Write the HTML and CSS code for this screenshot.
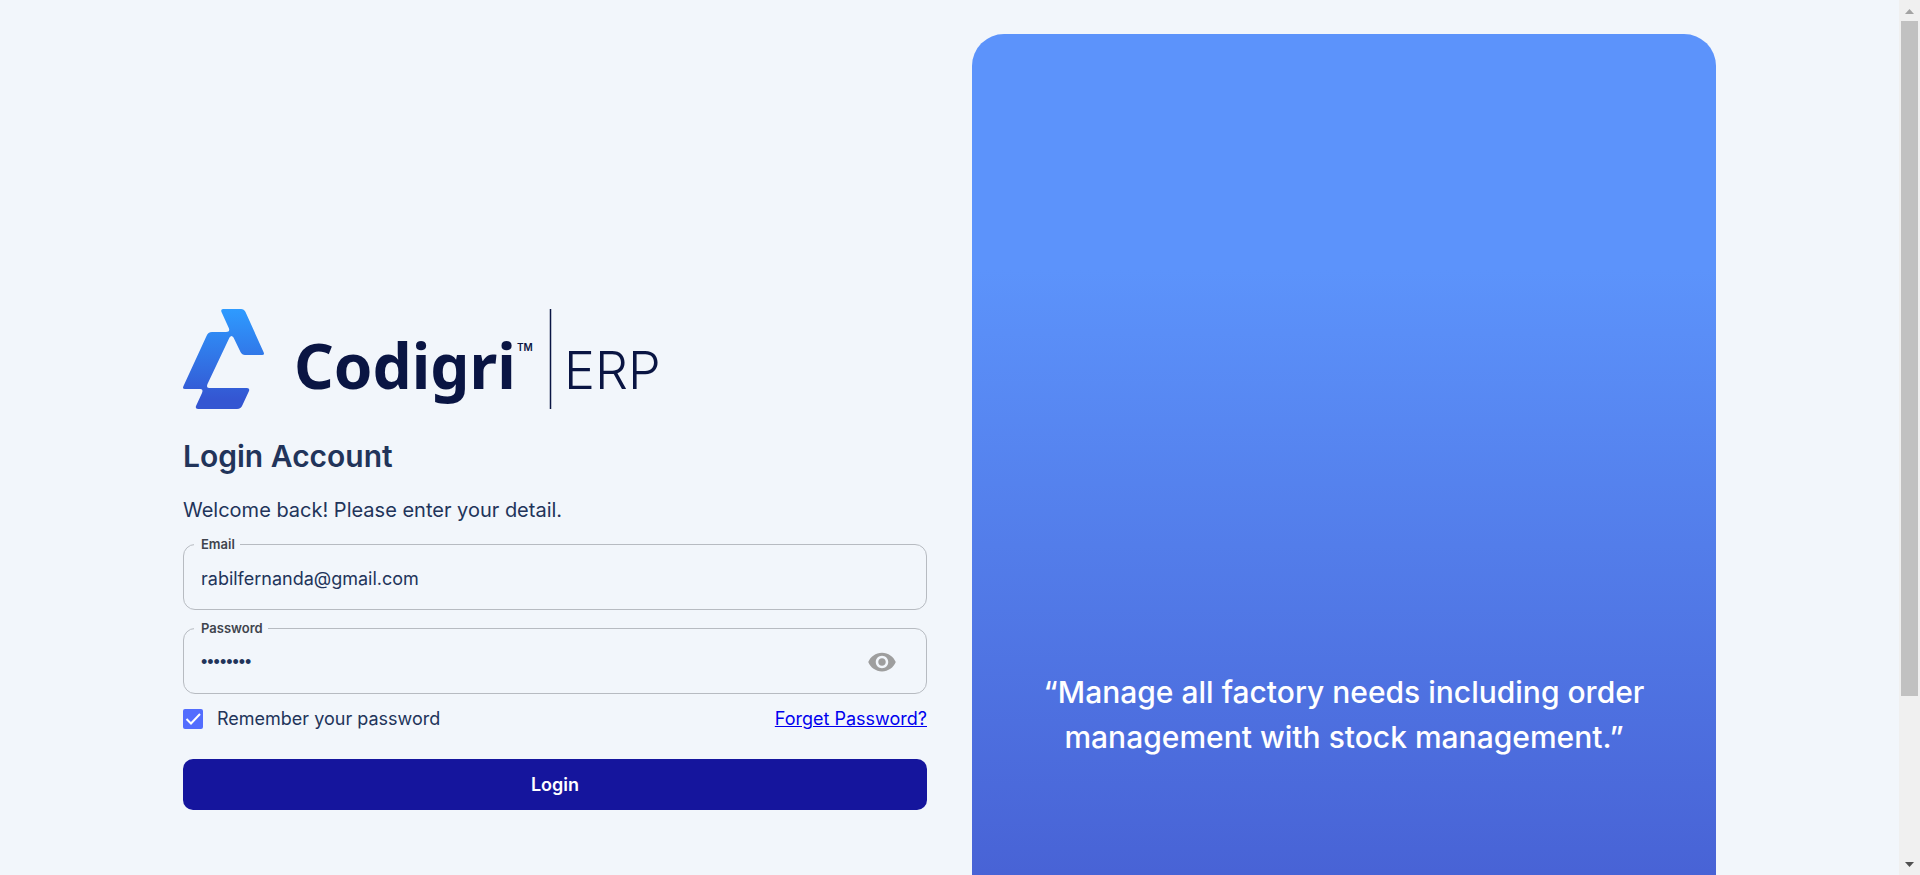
FILE: index.html
```html
<!DOCTYPE html>
<html lang="en">
<head>
<meta charset="utf-8">
<meta name="viewport" content="width=device-width, initial-scale=1">
<title>Codigri ERP - Login</title>
<link rel="stylesheet" href="styles.css">
</head>
<body>
<div class="window">
  <main class="page">
    <div class="layout">
      <form class="login">
        <svg class="logo" viewBox="0 0 480 100" width="480" height="100" role="img" aria-label="Codigri ERP">
          <defs>
            <linearGradient id="mark" x1="0" y1="0" x2="0" y2="1">
              <stop offset="0" stop-color="#2e9bff"/>
              <stop offset="0.9" stop-color="#3456d2"/>
              <stop offset="1" stop-color="#3456d2"/>
            </linearGradient>
          </defs>
          <path fill="url(#mark)" d="M40 0H58Q61 0 62.500 3L80.500 43Q82 46 79 46H62Q59 46 57.500 43L50.500 28.500Q48.500 25.500 46.500 28.500L24.500 75Q23 79 26 79H64Q67 79 66 82L59.500 96Q58 100 54 100H15Q12 100 13 97L19 84Q20.500 80 17.500 80H2Q-1 80 .5 77L23.500 27Q25 23 29 23H43Q47 23 46 19.500L38.500 3Q37.500 0 40 0Z"/>
          <text class="logo-name" x="111" y="80">Codigri</text>
          <text class="logo-tm" x="334" y="42">TM</text>
          <path d="M367.500 0V100" stroke="#0a1543" stroke-width="1.500"/>
          <text class="logo-product" x="381" y="80">ERP</text>
        </svg>
        <h1 class="title">Login Account</h1>
        <p class="intro">Welcome back! Please enter your detail.</p>
        <fieldset class="field">
          <legend class="field-legend"><label for="email">Email</label></legend>
          <div class="field-row">
            <input class="field-input" id="email" type="email" value="rabilfernanda@gmail.com">
          </div>
        </fieldset>
        <fieldset class="field">
          <legend class="field-legend"><label for="password">Password</label></legend>
          <div class="field-row">
            <input class="field-input field-input-secret" id="password" type="password" value="password">
            <button class="reveal" type="button" aria-label="Show password">
              <svg viewBox="0 0 24 24" width="30" height="30"><path fill="#9e9e9e" d="M12 4.500C7 4.500 2.730 7.610 1 12c1.730 4.390 6 7.500 11 7.500s9.270-3.110 11-7.500c-1.730-4.390-6-7.500-11-7.500zM12 17c-2.760 0-5-2.240-5-5s2.240-5 5-5 5 2.240 5 5-2.240 5-5 5zm0-8c-1.660 0-3 1.340-3 3s1.340 3 3 3 3-1.340 3-3-1.340-3-3-3z"/></svg>
            </button>
          </div>
        </fieldset>
        <div class="options">
          <label class="remember">
            <span class="check">
              <input class="check-box" type="checkbox" checked>
              <svg class="check-mark" viewBox="0 0 20 20" width="20" height="20"><path d="M3.500 10L8 14.500L17 5" fill="none" stroke="#fff" stroke-width="2"/></svg>
            </span>
            Remember your password
          </label>
          <a class="forgot" href="#">Forget Password?</a>
        </div>
        <button class="submit" type="submit">Login</button>
      </form>
      <section class="promo">
        <p class="quote">“Manage all factory needs including order management with stock management.”</p>
      </section>
    </div>
  </main>
  <div class="scrollbar" aria-hidden="true">
    <svg viewBox="0 0 17 17" width="17" height="17"><path fill="#a3a3a3" d="M4 14L8.500 9L13 14Z"/></svg>
    <div class="track"><div class="thumb"></div></div>
    <svg viewBox="0 0 17 17" width="17" height="17"><path fill="#505050" d="M4 4L8.500 9L13 4Z"/></svg>
  </div>
</div>
</body>
</html>
```
FILE: styles.css
```css
* {
  box-sizing: border-box;
}

body {
  margin: 0;
  background: #f2f6fb;
  color: #22345a;
  font-family: Inter, "Open Sans", sans-serif;
}

button,
input {
  font: inherit;
  color: inherit;
}

.window {
  display: flex;
  height: 100vh;
}

.page {
  flex: 1;
  min-width: 0;
  overflow: hidden;
  padding: 34px 24px;
}

.layout {
  display: grid;
  grid-template-columns: 1fr 1fr;
  gap: 45px;
  max-width: 1533px;
  min-height: 1027px;
  margin: 0 auto;
}

.login {
  display: flex;
  flex-direction: column;
  align-self: center;
  padding-top: 24px;
}

.logo {
  display: block;
  overflow: visible;
}

.logo text {
  fill: #0a1543;
}

.logo-name {
  font-family: "Noto Sans", sans-serif;
  font-size: 62px;
  font-weight: 700;
}

.logo-tm {
  font-size: 10px;
  font-weight: 600;
}

.logo-product {
  font-size: 52px;
  font-weight: 300;
}

.title {
  margin: 28px 0 0;
  font-size: 30px;
  line-height: 38px;
  font-weight: 600;
}

.intro {
  margin: 22px 0 13px;
  font-size: 20px;
  line-height: 26px;
}

.field {
  min-width: 0;
  margin: 0 0 10px;
  padding: 0 29px 5px 10px;
  border: 1px solid #b7bbc1;
  border-radius: 12px;
}

.field-legend {
  padding: 0 5px 0 7px;
  color: #3f444d;
  font-size: 13px;
  line-height: 16px;
  font-weight: 600;
}

.field-row {
  display: flex;
  align-items: center;
}

.field-input {
  flex: 1;
  min-width: 0;
  height: 52px;
  padding: 0 7px;
  border: 0;
  outline: 0;
  background: transparent;
  font-size: 18px;
}

.field-input-secret {
  font-family: "Liberation Sans", sans-serif;
}

.reveal {
  display: flex;
  padding: 0;
  border: 0;
  background: transparent;
}

.options {
  display: flex;
  align-items: center;
  justify-content: space-between;
  margin: 3px 0 28px;
  font-size: 18px;
  line-height: 24px;
}

.remember {
  display: flex;
  align-items: center;
  gap: 14px;
}

.check {
  display: grid;
}

.check-box,
.check-mark {
  grid-area: 1 / 1;
}

.check-box {
  width: 20px;
  height: 20px;
  margin: 0;
  appearance: none;
  border-radius: 2px;
  background: #536dfe;
}

.forgot {
  color: #0000ee;
}

.submit {
  height: 51px;
  border: 0;
  border-radius: 10px;
  background: #15159d;
  color: #fff;
  font-size: 18px;
  font-weight: 600;
}

.promo {
  padding: 636px 48px 0;
  border-radius: 32px;
  background: linear-gradient(180deg, #5c93fb 23%, #4254ca 100%);
}

.quote {
  margin: 0;
  color: #fff;
  font-size: 30px;
  line-height: 45px;
  font-weight: 500;
  text-align: center;
}

.scrollbar {
  display: flex;
  flex-direction: column;
  width: 21px;
  padding-left: 2px;
  background: #f0f0f0;
}

.track {
  flex: 1;
  padding: 4px 0;
}

.thumb {
  width: 17px;
  height: 81%;
  background: #c1c1c1;
}
```
